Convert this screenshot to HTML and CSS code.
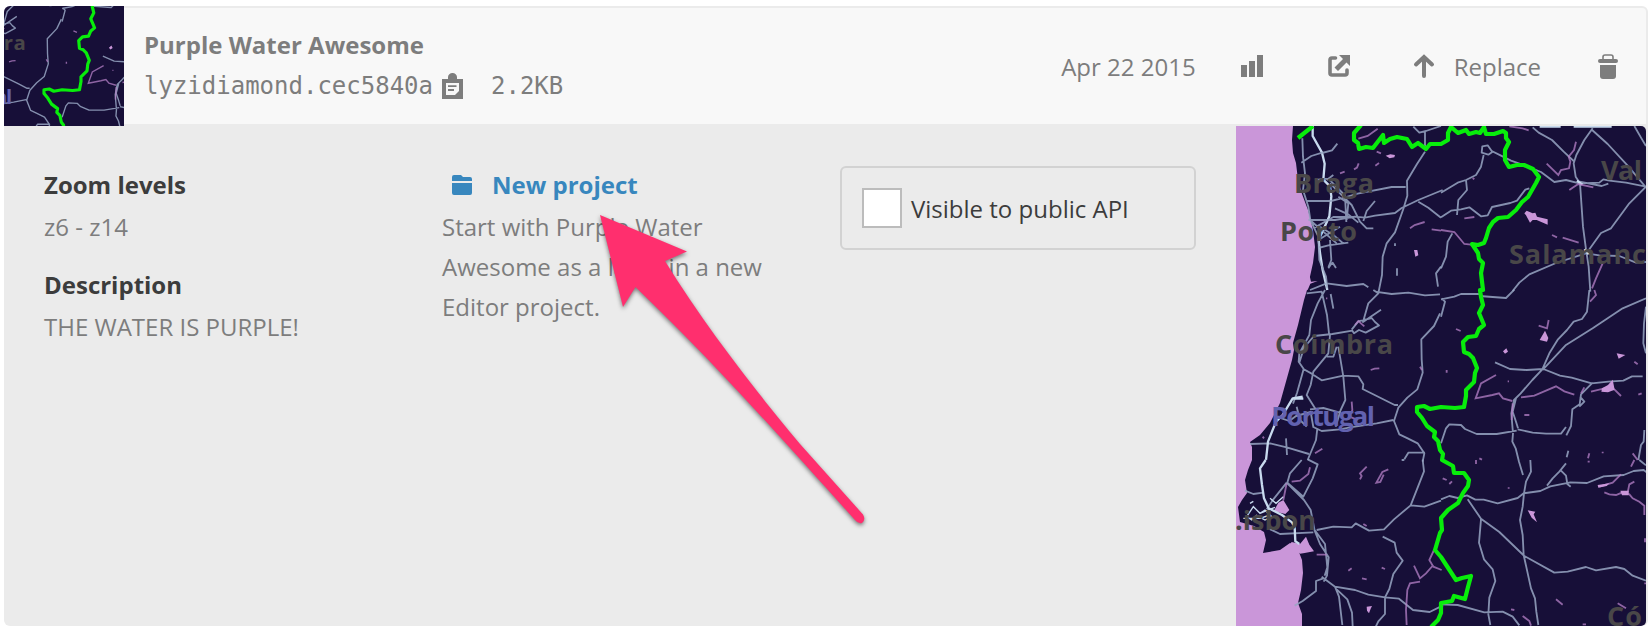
FILE: index.html
```html
<!DOCTYPE html>
<html lang="en">
<head>
<meta charset="utf-8">
<title>Purple Water Awesome</title>
<link rel="stylesheet" href="styles.css">
</head>
<body>
<main class="card">
  <header class="head">
    <svg class="thumb" viewBox="1364 296 159 159"><use href="#terrain"/></svg>
    <div class="title">
      <h1>Purple Water Awesome</h1>
      <div class="meta"><span>lyzidiamond.cec5840a</span>
        <svg class="clip" width="21" height="26" viewBox="0 0 21 26"><path fill="#7d7d7d" d="M0 6h6V4c0-2 2-4 4.500-4S15 2 15 4v2h6v20H0z"/><path fill="#f8f8f8" d="M4 10h13v8l-4 4H4z"/><path stroke="#7d7d7d" stroke-width="1.800" d="M6 13.100h8.500M6 17h6"/></svg>
        <span>2.2KB</span>
      </div>
    </div>
    <div class="actions">
      <span class="date">Apr 22 2015</span>
      <svg class="stats" width="24" height="24" viewBox="0 0 24 24"><path d="M1 11h6v12H1zM9 7h6v16H9zM17 1h6v22h-6z"/></svg>
      <svg class="share" width="24" height="24" viewBox="0 0 24 24"><path fill="none" stroke="#7d7d7d" stroke-width="3.600" stroke-linejoin="round" stroke-linecap="round" d="M8.500 4H5Q3 4 3 6v13q0 2 2 2h13q2 0 2-2v-3"/><path d="M12 1h11v11l-3.500-3.500-8.500 8.500-3.500-3.500L16 5z"/></svg>
      <span class="replace"><svg width="22" height="25" viewBox="0 0 22 25"><path fill="none" stroke="#7d7d7d" stroke-width="4" stroke-linecap="round" d="M11 4v18M3 10.500L11 3l8 7.500"/></svg><span>Replace</span></span>
      <svg class="trash" width="20" height="25" viewBox="0 0 20 25"><path fill="none" stroke="#7d7d7d" stroke-width="1.600" d="M5 5V3q0-2 2-2h6q2 0 2 2v2"/><rect y="5" width="20" height="4" rx="2"/><path d="M2 11h16v11q0 3-3 3H5q-3 0-3-3z"/></svg>
    </div>
  </header>
  <div class="body">
    <section class="col">
      <h2>Zoom levels</h2><p>z6 - z14</p>
      <h2 class="next">Description</h2><p>THE WATER IS PURPLE!</p>
    </section>
    <section class="col">
      <h2 class="link"><svg width="20" height="20" viewBox="0 0 20 20"><path fill="#3887be" d="M0 2q0-2 2-2h7l2 2h7q2 0 2 2v2H0zM0 8h20v10q0 2-2 2H2q-2 0-2-2z"/></svg>New project</h2>
      <p>Start with Purple Water Awesome as a layer in a new Editor project.</p>
    </section>
    <section class="col">
      <label class="toggle"><span class="box"></span><span class="caption">Visible to public API</span></label>
    </section>
    <svg class="map" viewBox="1236 126 410 500">
      <g id="terrain">
        <rect x="1236" y="126" width="410" height="500" fill="#170f38"/>
        <path fill="#ca96d9" d="M1236 126H1293L1292 140 1293 153 1296 163 1298 180 1302 194 1308 210 1313 230 1315 247 1313 263 1307 290 1304 300 1298 325 1293 343 1294 350 1292 360 1287 378 1280 403 1270 423 1260 435 1250 442 1252 447 1252 460 1248 470 1245 480 1247 493 1242 500 1238 507 1240 522 1254 526 1264 532 1266 540 1263 553 1280 550 1290 543 1297 547 1302 560 1303 573 1301 590 1298 603 1302 614 1302 626H1236z"/>
        <g transform="translate(1230 120) scale(.33333)">
          <path class="road bright" d="M248 18v30l28 50 8 33-4 48 20 20 4 30-6 60-18 40-14 30 4 40 8 51 14 60"/>
          <path class="road" d="M217 55l2 55 6 50-6 50 16 50 6 40 24 50 3 70 20 50 4 35M276 99l30-8 16-20M214 128l30-20 35-11M255 180l40-4 30 30 20 20 4 80M228 243h75l40-10 40-12 102-20h42M585 95l-24 37-30 50 1 45-12 40-25 70-25 33-12 40-2 55-10 50M550 20l18 18 20-5 45-15M585 35v55M235 300h80l60-10 30 3 30-6 60-8 20-15 50-24 73-30M565 245l30 18 38 30M300 190l30 30 35 35 25 50 20 20h20M435 243l-25 30-10 30M315 265l40 18 30 25M240 300l80 70M250 325l60-34 60 0M265 360l65-40M265 384l30-8 60-8M300 360l4 60-8 20 12-12 10 16M305 430l-10 15M240 510l50-20 60 8 50-6 15 10M633 440l-15 20 6 40M325 230l30 20-5 50M290 180l20-15M270 320l40 25 30 25"/>
          <path class="water" d="M385 56l28-8 30-22M440 95l13 5M372 148l9-5 5-13M436 137l11-8M540 325l14-10 30-9M605 328l28 4M330 160l14-5"/>
          <path class="lake" d="M467 107l14-4 14 2-2 7-14 3zM552 390l10 0 3 16-9 4zM235 450l8 35 20-2-22 8-8 19-10-5z"/>
          <path class="road pale" d="M501 445v22M495 370v8"/>
        </g>
        <g transform="translate(1441 120) scale(.33333)">
          <path class="road" d="M275 22l18 16 40 22 35 35 30 28M455 25l-25 35-24 45-8 25 6 40 13 20 9 130 9 68 8 52 5 75M450 27l50 45 60 65 55 65M580 18l20 35 15 25M415 190l-40-10-35 6-40-30-50-20-40-14-30-15-28-14-12-17-16 3-2 19 20 6 15-10M128 105l-8 35-15 25-30 15-25 8-50 30M75 180l3 30-26 30-4 45M0 292l30-20 30-4 25-6 35 27 20-3 13-25 55-12 20-7 25-33 12-4M415 190l60-2 12-10 18 4 50 6 60 12M412 184l70 14 20-7M615 200l-50 50-55 75-30 14-43 60M435 400l-90 29-80 34-30 25-20 25M435 400l40 6 60 2 50 20 30-2M0 445l15-35 5-45 14-25"/>
          <path class="road bright" d="M296 20h63M398 20h114M408 182l16 12M430 388l12 14"/>
          <path class="water" d="M205 19l40 6 18 6M405 65l-6 25-16 20 5 15-4 20-24 5-8 15-35-34M385 210l12-8 15-10 45 10M333 345l15 7M365 353l48 15M70 295l30-4M95 174l5 4M0 330l40 6 30 36 20 2M485 430l-20 45-12 30"/>
          <path class="lake" d="M257 272l18 8 8-2 5 12 32 8 0 16-33-14-12 0-8 8-12-22-5-6z"/>
        </g>
        <g transform="translate(1230 290) scale(.33333)">
          <path class="road" d="M230 10l45-5 16 70 6 55M285 0l-22 40-20 50-5 45-30 55-2 25 15 22-20 72-12 32M208 218l14-45 30-35 55-6 60-10 5 8 15-10 20 8 40-22-12-10-10-12-40 10-20 25M300 135l-5 55-45 55-8 40-12 30 25 40M325 170l15 90 6 70-14 30-15 50M220 237l25 14 30 20 65-14 45 2 15 24-2 14 60 30 36 18h10M430 0l15 10-30 30-16 56 54-37M435 5l50 7 50-4 50 8 45-3M630 70l-18 38-38 40 1 60 3 40-16 50-30 25-27 30-13 40 16 40 25 12 30 15 20 30-5 25M585 488h-50l-12 20M490 390l-50 10-80 12-30 6-55 5-25-12-8-45-44 12-20 15-30-10M240 358l40-4 50 14M262 415l-4 35-25 60M60 462l60-2 50 12 67 20M168 445l3 50M200 350l10 40 20 20M302 12l8 44M290 200h20l10-30"/>
          <path class="road bright" d="M218 320l-30 5-30 50-20 20-24 60-6 55M190 326h30"/>
          <path class="water" d="M288 25h4M422 240l12-4 14-1M365 335l2 25-8 20 24 10M570 230l6 10M255 490l22-14M375 105l10-12 18 16M98 440l4 5"/>
        </g>
        <g transform="translate(1441 290) scale(.33333)">
          <path class="road" d="M0 28l40-8 20-8h55M115 18l80 6 25-25M0 80l12-45-10-10M445 0l-7 65-15 22-25 8-20 25-27 28-25 40-22 50-30 32-35 40-20 20-8 40 5 60-2 25 10 20 10 40 12 40M615 25l-70 30-90 60-80 50-70 75M162 217l45 20 50 3 50-3 50 20 35 6 60 17 50-5 45-3 26-13h32M455 278l-35 35-4 30-22 15-4 50-14 28M225 325l-10 40 10 30 6 20M230 418l45 10 40 3h45l15-20M0 460l15-45 10-12 35 2 12 12 35 15h60l60-10M615 50l-6 50-2 60 8 30M610 420l-2 35-8 10-8 45M382 482l-5 20M415 350l15-15-13-15"/>
          <path class="water" d="M460 0l5 15-18 20M45 117l14 6M323 90l-5 25-25-8M165 255l-45 25-16 45 50-10 20-5 12 15 28 8M240 322l40-5 65-28 25 15 30 10M215 340l-3 50M420 310l10-18M450 305l40-10 30 3 20 20M592 314l10-4M200 274h4M250 375h15M485 485v5M445 490l-4 15M575 490l15 20M115 505l8 4M17 240v8M580 215l10 8"/>
          <path class="lake" d="M312 122l10 22-4 11-22-5zM186 184l10-9 5 10-9 6zM527 190l26 5-20 11zM483 295l18-10 14-16 6 30-20 8-20-2z"/>
        </g>
        <g transform="translate(1230 460) scale(.33333)">
          <path class="lake" d="M145 128l15-8 18 30-12 12-35-8zM185 246l25 6 18-22 10 24 14 20-28 5-14 2-30-28zM410 440l16-2-4 8-5 14-6-8z"/>
          <path class="road" d="M215 0l-35 40-8 28 48 42 28-55 15-42-30-15M170 68l-40 50-20 30M172 70l50 50 20 30 12 62 16 40 26 40-5 55-10 18M255 212l30 40 7 70-8 25M45 92l25 10 30-4M260 210l50-10 55 2 12-12 40 22 45-4 30-30 50-42 40-102-4-35M543 136l40 4 50-18M515 0h8M458 230l36 18 6 30 18 24-28 40-12 45-13 25v50l-20 22-12 25M275 350l40 30 60 10 40 14 50 8 42 4 42 34 50 6 40-20M280 355l-22 8v30l-40 30-24 14M315 380l12 30 10 85M320 388l32 30 14 40 2 40M115 205l35 17 100-5"/>
          <path class="road bright" d="M107 0l-17 25 6 50 6 40 14 30 40 20 30 22 8 15 2 42 12 8"/>
          <path class="streets" d="M50 170l20-30 20 20 15-10 20 20-20 10-25-14-15 14zM60 130l10-6M90 160l45-18M120 115l18 15 22-20M40 175h50l30-10"/>
          <path class="water" d="M185 65l25-3 25-20 5-20M410 20l-20 20 5 8-5 10M475 28l-18 8-18 32 12-2 10-22M355 332l10-7M455 323l10 4M396 355l14 3M260 284l30 0M400 192l10 6M635 330l-25-10-12-20 14-30M610 315l-22 25-18 15-18-38M570 365l-30 5-8 20-4 60 2 45M170 70l-10 50"/>
        </g>
        <g transform="translate(1441 460) scale(.33333)">
          <path class="road" d="M268 0l2 35-15 30-6 35-4 40-8 40 8 45 3 60 22 100 12 30 4 40 6 40M0 118l25-10 25 6 28-8 25 13h25l42 11 60-16 18-14 50-7 30-14 60-12 50 2 50-20 60-4 30-12 30-3 17 14h20M80 118l40 58 55 40 75 72 90 50 40-3 55-14 30 10 60-10 25 6 25 20 40 15M120 178l-6 70 15 50 26 30 8 35-18 50-3 50 6 32M0 433l50 2 80 22 55-2 30 15 20 26M375 10l-20 25-20 20-17 22M360 32l15 15 4 25 10 8M595 0l20 16"/>
          <path class="water" d="M105 0v12M5 55l12 5M25 72l8-8M440 5h6M203 82v4M490 97l15 6 20 2 20-8 20 6 10 12 20 10 15 12v28M560 98l5-25 15-8M475 80l40-12 25-25M570 20l10-20M345 418l20 16M425 493h10M245 468l20 15 5 14M210 448l10 2M530 430l25 15M610 370h5M612 235v12"/>
          <path class="lake" d="M260 151l23 4-5 8 10 24-16-14zM470 75l35-5-8 8-25 5zM538 92h25v14h-20z"/>
        </g>
        <path class="border" d="M1298 138L1313 126M1361 125L1354 133 1354 140 1358 143 1359 149 1366 147 1373 148 1383 135 1384 143 1390 139 1397 137 1407 139 1412 147 1418 143 1426 149 1430 144 1441 144 1448 140 1448 133 1451 127 1458 133 1466 130 1469 134 1476 132 1480 133 1484 127 1486 134 1494 134 1503 131 1506 133 1506 138 1509 142 1505 150 1505 160 1509 167 1517 165 1524 165 1533 169 1539 177 1536 183 1528 197 1522 202 1516 210 1508 217 1498 218 1493 222 1489 228 1486 238 1484 243 1478 245 1472 244 1478 253 1479 259 1483 263 1481 273 1483 290 1480 290 1481 297 1483 305 1479 313 1484 325 1479 329 1476 336 1468 337 1463 342 1464 352 1469 354 1473 358 1477 368 1475 373 1474 382 1468 388 1466 390 1466 396 1464 407 1455 408 1441 407 1430 409 1424 406 1417 407 1417 412 1422 418 1427 426 1435 432 1434 437 1438 441 1440 450 1443 454 1442 460 1453 466 1454 473 1464 473 1469 480 1468 486 1463 493 1458 503 1448 510 1441 518 1442 530 1440 533 1435 550 1441 557 1456 580 1462 578 1471 576 1468 587 1465 599 1454 596 1452 601 1441 603 1441 613 1438 620 1431 627"/>
        <g class="labels">
          <text x="1294" y="192.500" textLength="80">Braga</text>
          <text x="1280" y="240.500" textLength="77">Porto</text>
          <text x="1275" y="354" textLength="118">Coimbra</text>
          <text class="country" x="1271" y="425.500" textLength="104">Portugal</text>
          <text x="1235" y="530" textLength="81">.isbon</text>
          <text x="1509" y="263.500" textLength="137">Salamanc</text>
          <text x="1601" y="179.500" textLength="41">Val</text>
          <text x="1607" y="625.500" textLength="35">Có</text>
        </g>
      </g>
    </svg>
  </div>
</main>
<svg class="pointer" width="290" height="330" viewBox="590 205 290 330"><path fill="#ff2f6e" d="M600 215L687 251.500 665 261C705 326 755 390 800 444L863 514.500Q866 520 862 523 858 524 855 520C792 450 718 366 635.500 287L623 307z"/></svg>
</body>
</html>
```
FILE: styles.css
```css
* { box-sizing: border-box; }
body { margin: 0; padding: 6px 4px; height: 632px; overflow: hidden; background: #fff; font: 24px/40px "Open Sans", "Noto Sans", sans-serif; color: #7d7d7d; }
h1, h2, p { margin: 0; font-size: 24px; line-height: 40px; }
svg { display: block; flex: none; fill: #7d7d7d; }
.card { width: 1644px; height: 620px; border-radius: 6px; overflow: hidden; background: #ebebeb; }
.head { display: flex; height: 120px; }
.thumb { width: 120px; height: 120px; }
.title { flex: 1; height: 116px; margin-top: 2px; padding: 17px 0 0 20px; background: #f8f8f8; }
.meta { display: flex; align-items: center; font-family: "DejaVu Sans Mono", monospace; }
.meta span { padding-top: 1px; }
.clip { margin: 0 28px 0 9px; }
.actions { display: flex; align-items: center; height: 116px; margin: 2px 2px 0 0; padding-right: 28px; background: #f8f8f8; border-top-right-radius: 4px; }
.actions span span, .date { padding-top: 2px; }
.date { margin-right: 44px; }
.stats { margin-right: 63px; }
.share { margin-right: 62px; }
.replace { display: flex; align-items: center; gap: 19px; margin-right: 57px; }
.body { display: flex; height: 500px; padding-left: 40px; }
.col { width: 356px; margin-right: 42px; padding-top: 39px; }
.col h2 { color: #3c3c3c; margin-bottom: 2px; }
.col .next { margin-top: 18px; }
.col .link { display: flex; align-items: center; gap: 20px; padding-left: 10px; color: #3887be; }
.col:nth-child(3) { margin-right: 40px; padding-top: 40px; }
.toggle { display: flex; align-items: center; gap: 9px; height: 84px; padding-left: 20px; border: 2px solid #d2d2d2; border-radius: 6px; color: #3c3c3c; }
.caption { padding-top: 2px; }
.box { width: 40px; height: 40px; background: #fff; border: 2px solid #bcbcbc; }
.map { width: 410px; height: 500px; border-radius: 0 5px 5px 0; }
.road { fill: none; stroke: #98a6c3; stroke-width: 5.5; stroke-linejoin: round; opacity: .85; }
.road.bright { stroke: #c8daee; stroke-width: 7; opacity: 1; }
.streets { fill: none; stroke: #c8daee; stroke-width: 4; }
.water { fill: none; stroke: #b781c8; stroke-width: 5.5; opacity: .75; }
.lake { fill: #ca96d9; }
.border { fill: none; stroke: #08ed0b; stroke-width: 4.2; stroke-linejoin: round; }
.labels { fill: #494748; font: 700 27px "Open Sans", "Noto Sans", sans-serif; }
.country { fill: #6262b0; }
.pointer { position: absolute; left: 590px; top: 205px; filter: drop-shadow(0 2px 2px rgba(0, 0, 0, .5)); }
```
